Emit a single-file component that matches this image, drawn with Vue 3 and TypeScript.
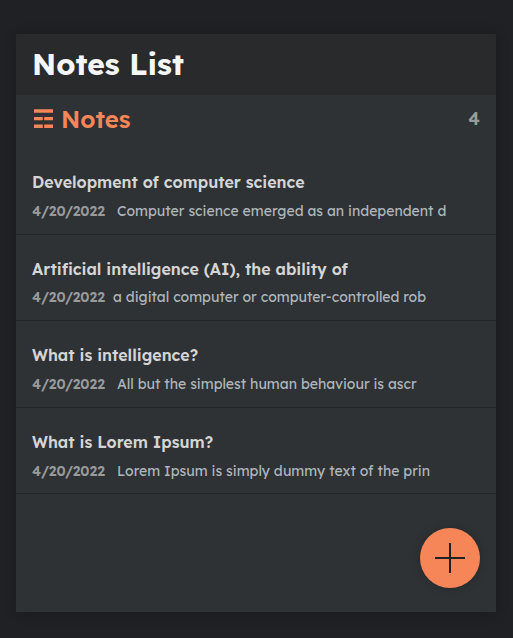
<script setup lang="ts">
interface Note {
  id: number
  title: string
  date: string
  excerpt: string
  gap: number
}

const notes: Note[] = [
  { id: 1, title: 'Development of computer science', date: '4/20/2022', excerpt: 'Computer science emerged as an independent d', gap: 12 },
  { id: 2, title: 'Artificial intelligence (AI), the ability of', date: '4/20/2022', excerpt: 'a digital computer or computer-controlled rob', gap: 8 },
  { id: 3, title: 'What is intelligence?', date: '4/20/2022', excerpt: 'All but the simplest human behaviour is ascr', gap: 12 },
  { id: 4, title: 'What is Lorem Ipsum?', date: '4/20/2022', excerpt: 'Lorem Ipsum is simply dummy text of the prin', gap: 12 },
]
</script>

<template>
  <div class="page">
    <main class="app">
      <header class="app-header"><h1>Notes List</h1></header>
      <div class="notes-header">
        <h2>
          <svg class="trigram" width="19" height="20" viewBox="0 0 19 20" aria-hidden="true">
            <path d="M0 .3H19V3.8H0ZM0 7.9H8.8V11.3H0ZM10.2 7.9H19V11.3H10.2ZM0 15.5H8.8V19H0ZM10.2 15.5H19V19H10.2Z" fill="currentColor" />
          </svg>
          <span>Notes</span>
        </h2>
        <p class="count">{{ notes.length }}</p>
      </div>
      <div class="list">
        <article v-for="note in notes" :key="note.id" class="note">
          <h3>{{ note.title }}</h3>
          <p class="meta" :style="{ gap: note.gap + 'px' }">
            <span class="date">{{ note.date }}</span>
            <span class="excerpt">{{ note.excerpt }}</span>
          </p>
        </article>
      </div>
      <button class="add" type="button" aria-label="Add note">
        <svg width="30" height="30" viewBox="0 0 30 30"><path d="M15 0V30M0 15H30" stroke="#1f2124" stroke-width="2" /></svg>
      </button>
    </main>
  </div>
</template>

<style>
body {
  background: #202124;
}
</style>

<style scoped>
.page {
  box-sizing: border-box;
  height: 638px;
  padding: 34px 17px 26px 16px;
  background: #202124;
  font-family: Lexend, Inter, "Noto Sans", sans-serif;
}
.app {
  position: relative;
  height: 578px;
  background: #2e3235;
  box-shadow: 1px 1px 12px rgba(0, 0, 0, 0.2);
}
h1, h2, h3, p {
  margin: 0;
  white-space: nowrap;
}
.app-header {
  box-sizing: border-box;
  height: 61px;
  padding: 11px 16px;
  background: #292a2b;
  color: #f5f6f7;
}
h1 {
  font-size: 30px;
  line-height: 39px;
  font-weight: 700;
}
.notes-header {
  height: 53px;
  padding: 9px 16px 0 18px;
  box-sizing: border-box;
  display: flex;
  justify-content: space-between;
}
h2 {
  display: flex;
  align-items: center;
  height: 30px;
  gap: 8px;
  color: #f68657;
  font-size: 24px;
  line-height: 30px;
  font-weight: 600;
}
.count {
  color: #999b9b;
  font-size: 18px;
  line-height: 30px;
  font-weight: 600;
}
.note {
  box-sizing: border-box;
  height: 86.6px;
  padding: 24px 16px 0;
  border-bottom: 1px solid #232628;
}
h3 {
  color: #d5d5d5;
  font-size: 16px;
  line-height: 20px;
  font-weight: 600;
}
.meta {
  display: flex;
  margin-top: 8.8px;
  font-size: 14px;
  line-height: 20px;
}
.date {
  width: 73px;
  color: #999b9b;
  font-weight: 600;
}
.excerpt {
  color: #aeb6bd;
}
.add {
  position: absolute;
  right: 16px;
  bottom: 24px;
  display: grid;
  place-items: center;
  width: 60px;
  height: 60px;
  padding: 0;
  border: 0;
  border-radius: 50%;
  background: #f68657;
  box-shadow: 0 0 10px rgba(0, 0, 0, 0.2);
}
</style>
